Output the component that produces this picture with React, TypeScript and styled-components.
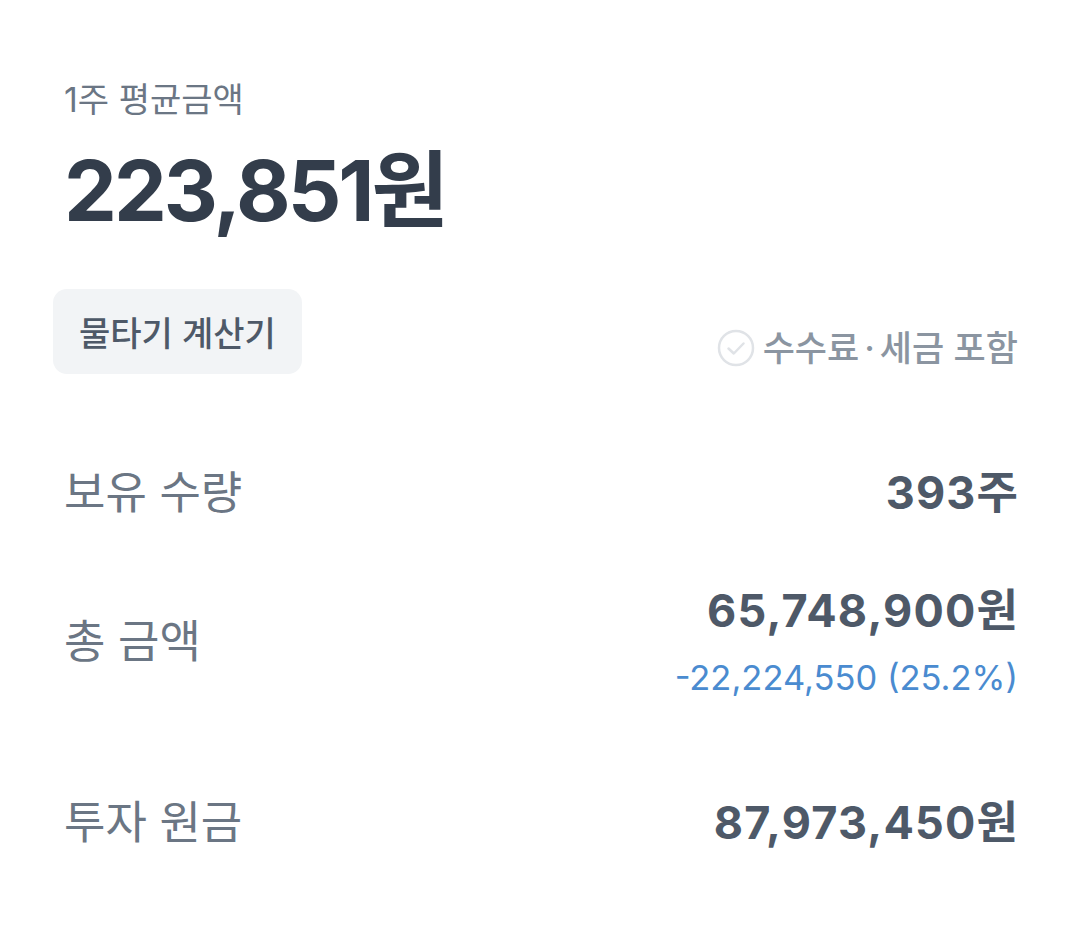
import React, { FC } from "react";
import styled, { createGlobalStyle } from "styled-components";

const GlobalStyle = createGlobalStyle`
    html, body {
        margin: 0;
        padding: 0;
        background: #ffffff;
    }
    body {
        font-family: "Inter", "Noto Sans CJK KR", sans-serif;
        -webkit-font-smoothing: antialiased;
    }
`;

const Page = styled.div`
    width: 1080px;
    height: 937px;
    box-sizing: border-box;
    padding: 80px 62px 0 64px;
    background: #ffffff;
`;

const Caption = styled.div`
    font-size: 34px;
    line-height: 40px;
    color: #6b7684;
    font-weight: 400;
`;

const BigAmount = styled.div`
    margin-top: 21px;
    font-size: 84px;
    line-height: 100px;
    font-weight: 700;
    color: #333d4b;
    letter-spacing: -3px;
`;

const ActionRow = styled.div`
    margin-top: 48px;
    display: flex;
    justify-content: space-between;
    align-items: flex-end;
`;

const CalcButton = styled.button`
    margin-left: -11px;
    height: 85px;
    padding: 0 26px;
    border: none;
    border-radius: 14px;
    background: #f2f4f6;
    color: #4e5968;
    font-family: inherit;
    font-size: 34px;
    font-weight: 500;
    cursor: pointer;
`;

const FeeCheck = styled.div`
    display: flex;
    align-items: center;
    gap: 8px;
    padding-bottom: 6px;
    font-size: 35px;
    line-height: 40px;
    color: #8b95a1;
    font-weight: 500;
`;

const Dot = styled.span`
    margin: 0 5px;
`;

const List = styled.div`
    margin-top: 84px;
    display: flex;
    flex-direction: column;
`;

const Row = styled.div<{ $height: number }>`
    display: flex;
    justify-content: space-between;
    align-items: center;
    height: ${p => p.$height}px;
`;

const Label = styled.div`
    font-size: 45px;
    line-height: 50px;
    color: #6b7684;
    font-weight: 400;
`;

const ValueBox = styled.div`
    display: flex;
    flex-direction: column;
    align-items: flex-end;
`;

const Value = styled.div`
    font-size: 45px;
    line-height: 50px;
    color: #4e5968;
    font-weight: 700;
    letter-spacing: 1.2px;
    margin-right: -1.2px;
`;

const Change = styled.div`
    margin-top: 22px;
    font-size: 34.5px;
    line-height: 40px;
    color: #4a8bd0;
    font-weight: 400;
`;

const CheckIcon: FC = () => (
    <svg width="38" height="38" viewBox="0 0 38 38" fill="none">
        <circle cx="19" cy="19" r="17" stroke="#e0e3e7" strokeWidth="2.5" />
        <path d="M11.5 19.5 L16.8 24.5 L26.5 14.5" stroke="#e0e3e7" strokeWidth="2.5" strokeLinecap="round" strokeLinejoin="round" />
    </svg>
);

export default function App() {
    return (
        <>
            <GlobalStyle />
            <Page>
                <Caption>1주 평균금액</Caption>
                <BigAmount>223,851원</BigAmount>
                <ActionRow>
                    <CalcButton>물타기 계산기</CalcButton>
                    <FeeCheck>
                        <CheckIcon />
                        <span>수수료<Dot>·</Dot>세금 포함</span>
                    </FeeCheck>
                </ActionRow>
                <List>
                    <Row $height={70}>
                        <Label>보유 수량</Label>
                        <Value>393주</Value>
                    </Row>
                    <Row $height={228}>
                        <Label>총 금액</Label>
                        <ValueBox>
                            <Value>65,748,900원</Value>
                            <Change>-22,224,550 (25.2%)</Change>
                        </ValueBox>
                    </Row>
                    <Row $height={134}>
                        <Label>투자 원금</Label>
                        <Value>87,973,450원</Value>
                    </Row>
                </List>
            </Page>
        </>
    );
}
